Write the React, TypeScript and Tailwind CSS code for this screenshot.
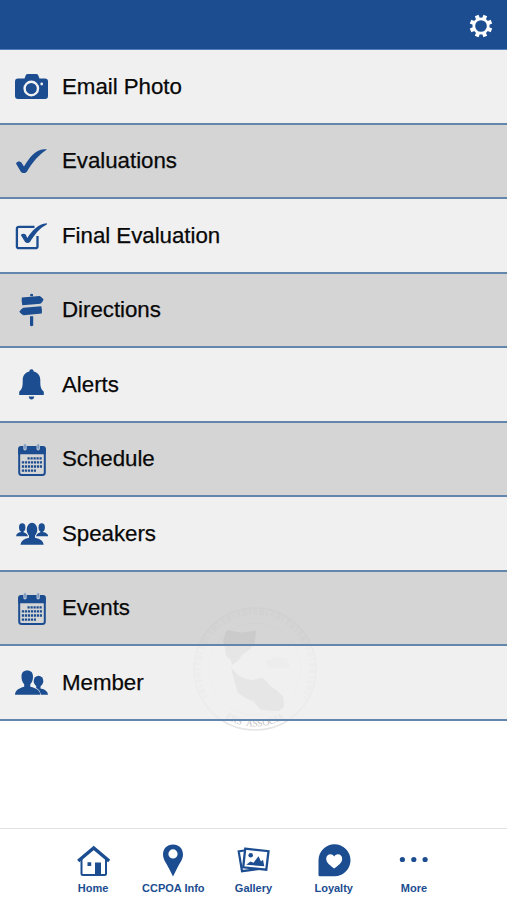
import type { ReactNode } from 'react'

const BLUE = '#1b4d90'

function RowIcon({ children }: { children: ReactNode }) {
  return (
    <svg viewBox="0 0 34 34" className="h-[34px] w-[34px] shrink-0" fill={BLUE} aria-hidden="true">
      {children}
    </svg>
  )
}

function CameraIcon() {
  return (
    <RowIcon>
      <path d="M3 9.500h6.500l1.300-3.200Q11.300 5 13 5h8q1.700 0 2.200 1.300L24.500 9.500H30q3 0 3 3V27q0 3-3 3H3q-3 0-3-3V12.500q0-3 3-3z" />
      <circle cx="16.300" cy="19.500" r="6.700" fill="none" stroke="#f2f2f2" strokeWidth="2.400" />
      <circle cx="26.700" cy="15" r="1.400" fill="#f2f2f2" />
    </RowIcon>
  )
}

function CheckIcon() {
  return (
    <RowIcon>
      <path d="M1 19.500C2.500 16.800 5.500 17 6.700 19l2.300 3.600C14 14 20 5.800 29 5.200q2-.2 3 .3C24 10.500 17.500 18 12 27.500c-1.500 2-4.800 2-6.300 0z" />
    </RowIcon>
  )
}

function CheckBoxIcon() {
  return (
    <RowIcon>
      <path
        d="M19.500 8.800H3.900Q1.900 8.800 1.900 10.800V28.200Q1.900 30.200 3.900 30.200H20.500Q22.500 30.200 22.500 28.200V18"
        fill="none"
        stroke={BLUE}
        strokeWidth="2.300"
      />
      <path d="M5.800 17q2.400-2.500 4.900-.4l1.600 3.300C17 12.500 23 6 31.800 5.200c.4.600.2 1-.4 1.500C24.500 10 19.700 16.500 15 24q-2.400 2-4.900 0z" />
    </RowIcon>
  )
}

function SignpostIcon() {
  return (
    <RowIcon>
      <path d="M15.200 1.300q1.500-1 2.800 0v2h-2.800zM15 23.300h3.200v9.200q-1.600 1.300-3.200 0z" />
      <path d="M6.800 4.600l18-1.500q2 1 3.800 3.500-1.200 3.200-3.200 4.200L7.300 12.300q-1-3.700-.5-7.700z" />
      <path d="M8.300 14.700l18-1.500q1 3.700.5 7.300L8.500 22.200Q6 21 4.300 18.700q1.500-2.500 4-4z" />
    </RowIcon>
  )
}

function BellIcon() {
  return (
    <RowIcon>
      <path d="M14.300 4.500q0-2.200 2.200-2.200t2.200 2.200c4.700 1.300 6.600 4.500 6.600 8.800 0 6 .2 8.300 3.500 11.500V28H4.200v-3.200c3.300-3.200 3.500-5.500 3.500-11.500 0-4.300 1.900-7.500 6.600-8.800z" />
      <path d="M13.700 29.600h5.600q-.5 3-2.800 3t-2.800-3z" />
    </RowIcon>
  )
}

function CalendarIcon() {
  return (
    <RowIcon>
      <rect x="4.200" y="5" width="25.600" height="28" rx="2.500" fill="none" stroke={BLUE} strokeWidth="2" />
      <path d="M3.200 12.300V6.500q0-2.300 2.300-2.300h23q2.300 0 2.300 2.300v5.800z" />
      <path d="M10 3.500v3.200M23.200 3.500v3.200" stroke="#b3c1d6" strokeWidth="3.400" strokeLinecap="round" />
      <path d="M10 3v3.200M23.200 3v3.200" stroke="#7c96bb" strokeWidth="1.600" strokeLinecap="round" />
      <g stroke={BLUE} strokeWidth="2.300" strokeDasharray="2.200 .8">
        <path d="M12.500 16.300h14.600M6.800 20.400h20.300M6.800 24.500h20.300M6.800 28.600h14.300" />
      </g>
    </RowIcon>
  )
}

function SpeakersIcon() {
  return (
    <RowIcon>
      <ellipse cx="7.200" cy="11.500" rx="3.200" ry="4.200" />
      <ellipse cx="26.700" cy="11.500" rx="3.200" ry="4.200" />
      <path d="M6 14h2.500v2.300q2.800.8 3.600 2.200l1 1.700H1.200q0-3.500 4.800-4.200zM25.400 14h2.500v2q4.800.7 5.300 4.200H20.800l1-1.700q.7-1.400 3.600-2.200z" />
      <ellipse cx="17" cy="13.700" rx="5.300" ry="7" stroke="#f0f0f0" strokeWidth="1.200" paintOrder="stroke" />
      <path d="M14 18h6v3.800q8.200 1.400 8.700 6.900H5.500Q6 23.200 14 21.800z" />
    </RowIcon>
  )
}

function MemberIcon() {
  return (
    <RowIcon>
      <ellipse cx="23.500" cy="16.200" rx="4.800" ry="5.500" />
      <path d="M21.500 19h4v4.500q7.200 1.200 7.500 6.300H25l-4-5.500z" />
      <path
        d="M12.200 5.500c4 0 5.800 2.300 5.800 6 0 3.500-1 6.200-2.700 7.700v2.600c6 1.500 9.700 3.200 10 8H0c.3-4.800 4-6.500 9.200-8v-2.600C7.500 17.700 6.500 15 6.500 11.500c0-3.700 1.900-6 5.700-6z"
        stroke="#f0f0f0"
        strokeWidth="1.400"
        paintOrder="stroke"
      />
    </RowIcon>
  )
}

function GearIcon() {
  return (
    <svg viewBox="0 0 24 24" className="h-6 w-6" aria-label="Settings">
      <circle cx="12" cy="12" r="7.200" fill="none" stroke="white" strokeWidth="2.700" />
      {[22.5, 67.5, 112.5, 157.5, 202.5, 247.5, 292.5, 337.5].map((angle) => (
        <path key={angle} d="M10 4.500V.7h4v3.800z" fill="white" transform={`rotate(${angle} 12 12)`} />
      ))}
    </svg>
  )
}

function TabIcon({ children }: { children: ReactNode }) {
  return (
    <svg viewBox="0 0 34 34" className="h-[34px] w-[34px]" fill={BLUE} aria-hidden="true">
      {children}
    </svg>
  )
}

const rows = [
  { label: 'Email Photo', icon: <CameraIcon /> },
  { label: 'Evaluations', icon: <CheckIcon /> },
  { label: 'Final Evaluation', icon: <CheckBoxIcon /> },
  { label: 'Directions', icon: <SignpostIcon /> },
  { label: 'Alerts', icon: <BellIcon /> },
  { label: 'Schedule', icon: <CalendarIcon /> },
  { label: 'Speakers', icon: <SpeakersIcon /> },
  { label: 'Events', icon: <CalendarIcon /> },
  { label: 'Member', icon: <MemberIcon /> },
]

const tabs = [
  {
    label: 'Home',
    icon: (
      <TabIcon>
        <path d="M5.500 15v15.500q0 1.500 1.500 1.500h21.500q1.500 0 1.500-1.500V15" fill="none" stroke={BLUE} strokeWidth="2" />
        <path d="M2.200 18L17.700 5 33.200 18" fill="none" stroke={BLUE} strokeWidth="3.400" />
        <path d="M11.500 19.200h3.700v3.700h-3.700zM19 19.500h6V32h-6z" />
      </TabIcon>
    ),
  },
  {
    label: 'CCPOA Info',
    icon: (
      <TabIcon>
        <path
          fillRule="evenodd"
          d="M17 1.500c6 0 10 4.300 10 10 0 4.700-3.500 9-6 14L17 33.500l-4-8c-2.500-5-6-9.300-6-14 0-5.700 4-10 10-10zm0 4.800a4.600 4.600 0 1 0 0 9.200 4.600 4.600 0 0 0 0-9.200z"
        />
      </TabIcon>
    ),
  },
  {
    label: 'Gallery',
    icon: (
      <TabIcon>
        <path d="M8 7.500l-5.300 1 3.300 19.700 21-2.700" fill="none" stroke={BLUE} strokeWidth="2.200" />
        <path d="M9.200 5.700l23.300 2.500-2.200 18.500L7.200 24.300z" fill="white" stroke={BLUE} strokeWidth="2.300" />
        <circle cx="14.700" cy="12.300" r="2.300" />
        <path d="M10.200 21.700l4.300-3.300 3 1.300 5-6.500 2.500 5.300 2-1.700 1.300 6.500z" />
      </TabIcon>
    ),
  },
  {
    label: 'Loyalty',
    icon: (
      <TabIcon>
        <path d="M17.500 1.300a16 16 0 0 1 0 32H2.800q-1.300 0-1.300-1.300V17.300a16 16 0 0 1 16-16z" />
        <path
          fill="white"
          d="M17.200 25.500c-3.500-2.700-8-5.500-8-9.700 0-5 5.800-6 8-2.300 2.200-3.700 8-2.700 8 2.300 0 4.200-4.500 7-8 9.700z"
        />
      </TabIcon>
    ),
  },
  {
    label: 'More',
    icon: (
      <TabIcon>
        <circle cx="5.400" cy="16.500" r="2.600" />
        <circle cx="16.800" cy="16.500" r="2.600" />
        <circle cx="28.100" cy="16.500" r="2.600" />
      </TabIcon>
    ),
  },
]

function Seal() {
  return (
    <svg viewBox="0 0 126 126" className="absolute top-[606px] left-[192px] h-[126px] w-[126px]" aria-hidden="true">
      <circle cx="63" cy="63" r="61" fill="none" stroke="#e6e6e6" strokeWidth="1.500" />
      <circle cx="63" cy="63" r="46" fill="none" stroke="#f0f0f0" />
      <path
        d="M14 92A57 57 0 1 1 112 92"
        fill="none"
        stroke="#ededed"
        strokeWidth="6"
        strokeDasharray="3 2 5 2 2 3"
      />
      <path
        d="M34.500 24l15 2.500L64 24.500l-1 12-5 7-8 5.500-4 6-6 4-1.500-5-4.500-4-1-8-2-7z"
        fill="#cccccc"
      />
      <path
        d="M38.700 61l7.300 8 8 4 7.500 1 9-2.500 8 8.500 7 5 6 6 .5 10-5 4-18-1-8-9-6-2-9.500-6.500L43 77z"
        fill="#cccccc"
      />
      <path d="M74 55l10-4 11 1 3 10H76z" fill="#efefef" />
      <defs>
        <path id="seal-bottom" d="M5.500 63a57.500 57.500 0 0 0 115 0" />
      </defs>
      <text fill="#c2c2c2" fontSize="9.500" fontFamily="Liberation Serif, serif" textAnchor="middle">
        <textPath href="#seal-bottom" startOffset="50%">
          ERS’ ASSOCIA
        </textPath>
      </text>
    </svg>
  )
}

export default function App() {
  return (
    <div className="relative flex h-[900px] w-full flex-col overflow-hidden bg-white font-['Liberation_Sans',Arial,sans-serif]">
      <Seal />
      <header className="flex h-[50px] shrink-0 items-center justify-end border-b border-[#5380ba] bg-[#1b4d90] pt-0.5 pr-3.5">
        <GearIcon />
      </header>
      <ul className="relative">
        {rows.map((row) => (
          <li
            key={row.label}
            className="flex h-[74.5px] items-center gap-[13px] border-b-2 border-[#6386ac] bg-[#ececec]/80 bg-clip-padding pl-[15px] even:bg-[#cacaca]/80"
          >
            {row.icon}
            <span className="pt-px text-[22.3px] leading-none tracking-[-0.03px] text-[#080808] [-webkit-text-stroke:0.25px_#080808]">
              {row.label}
            </span>
          </li>
        ))}
      </ul>
      <nav className="mt-auto grid h-[72px] shrink-0 grid-cols-5 border-t border-[#e2e2e2] bg-white px-[53px]">
        {tabs.map((tab) => (
          <a key={tab.label} className="flex flex-col items-center pt-[14px]">
            {tab.icon}
            <span className="mt-[5px] text-[11px] leading-3 font-bold whitespace-nowrap text-[#1b4d90]">{tab.label}</span>
          </a>
        ))}
      </nav>
    </div>
  )
}
